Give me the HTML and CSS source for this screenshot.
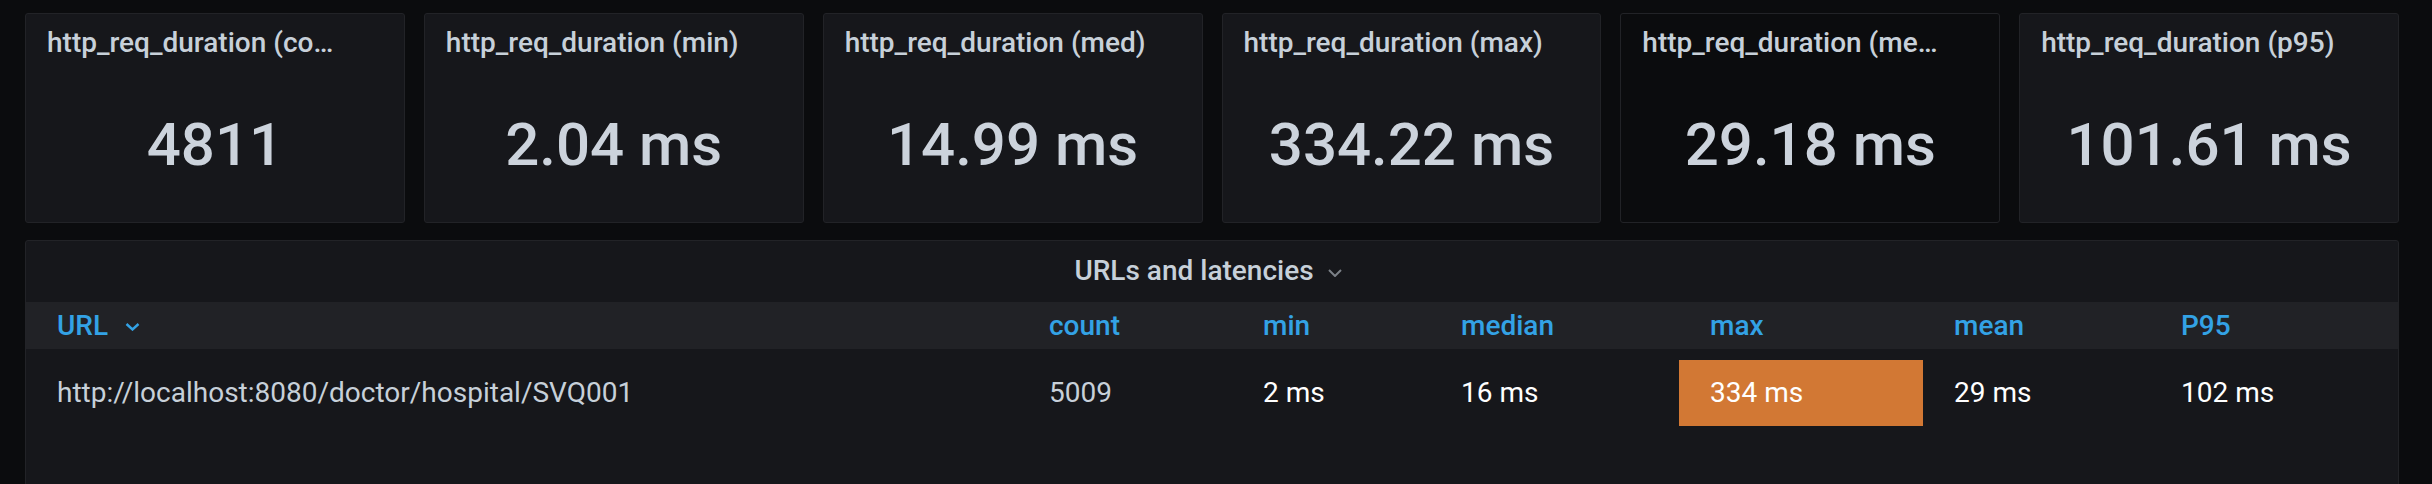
FILE: index.html
```html
<!DOCTYPE html>
<html>
<head>
<meta charset="utf-8">
<link rel="stylesheet" href="styles.css">
</head>
<body>
<div class="dash">
  <div class="stats">
    <div class="stat"><div class="stat-title stat-title-short">http_req_duration (count)</div><div class="stat-value">4811</div></div>
    <div class="stat"><div class="stat-title">http_req_duration (min)</div><div class="stat-value">2.04 ms</div></div>
    <div class="stat"><div class="stat-title">http_req_duration (med)</div><div class="stat-value">14.99 ms</div></div>
    <div class="stat"><div class="stat-title">http_req_duration (max)</div><div class="stat-value">334.22 ms</div></div>
    <div class="stat stat-dark"><div class="stat-title">http_req_duration (mean)</div><div class="stat-value">29.18 ms</div></div>
    <div class="stat"><div class="stat-title">http_req_duration (p95)</div><div class="stat-value">101.61 ms</div></div>
  </div>
  <div class="table-panel">
    <div class="tp-title">URLs and latencies<svg class="tp-chev" width="14" height="8" viewBox="0 0 14 8"><path d="M1 1l6 6 6-6" fill="none" stroke="currentColor" stroke-width="2"/></svg></div>
    <div class="trow thead">
      <div class="cell">URL<svg class="sort-chev" width="15" height="8" viewBox="0 0 15 8"><path d="M1.5 1l6 5.5 6-5.5" fill="none" stroke="currentColor" stroke-width="2.4"/></svg></div>
      <div class="cell">count</div>
      <div class="cell">min</div>
      <div class="cell">median</div>
      <div class="cell">max</div>
      <div class="cell">mean</div>
      <div class="cell">P95</div>
    </div>
    <div class="trow tbody">
      <div class="cell">http://localhost:8080/doctor/hospital/SVQ001</div>
      <div class="cell">5009</div>
      <div class="cell white">2 ms</div>
      <div class="cell white">16 ms</div>
      <div class="cell white warn">334 ms</div>
      <div class="cell white">29 ms</div>
      <div class="cell white">102 ms</div>
    </div>
  </div>
</div>
</body>
</html>
```
FILE: styles.css
```css
html, body {
  margin: 0;
  padding: 0;
  background: #0b0c0e;
  height: 100%;
  overflow: hidden;
}
body {
  font-family: Roboto, "Liberation Sans", sans-serif;
  color: #c7d0d9;
}
.dash {
  padding: 13px 33px 0 25px;
}
.stats {
  display: grid;
  grid-template-columns: repeat(6, 1fr);
  column-gap: 19px;
}
.stat {
  height: 210px;
  box-sizing: border-box;
  background: #16171b;
  border: 1px solid #222327;
  border-radius: 3px;
}
.stat-dark {
  background: #0b0c0e;
}
.stat-title {
  padding: 13px 0 0 21px;
  font-size: 28px;
  font-weight: 500;
  line-height: 32px;
  white-space: nowrap;
  overflow: hidden;
  text-overflow: ellipsis;
  max-width: 303px;
}
.stat-title-short {
  max-width: 292px;
}
.stat-value {
  margin-top: 51px;
  text-align: center;
  font-size: 60px;
  font-weight: 500;
  line-height: 70px;
  color: #ccd3dc;
}
.table-panel {
  margin-top: 17px;
  height: 260px;
  box-sizing: border-box;
  background: #16171b;
  border: 1px solid #222327;
  border-radius: 3px;
}
.tp-title {
  height: 61px;
  line-height: 59px;
  padding-right: 8px;
  text-align: center;
  font-size: 28px;
  font-weight: 500;
  color: #c7d0d9;
}
.tp-chev {
  color: #7b8087;
  margin-left: 14px;
  vertical-align: 3px;
}
.trow {
  display: grid;
  grid-template-columns: 992px 214px 198px 249px 244px 227px 1fr;
}
.thead {
  background: #212226;
  height: 47px;
  line-height: 47px;
  font-size: 28px;
  font-weight: 500;
  color: #33a2e5;
}
.tbody {
  margin-top: 11px;
  height: 66px;
  line-height: 66px;
  font-size: 28px;
  color: #c7d0d9;
}
.cell {
  padding-left: 31px;
  white-space: nowrap;
}
.sort-chev {
  margin-left: 17px;
  vertical-align: 4px;
}
.white {
  color: #ffffff;
}
.warn {
  background: #d27834;
}
```
